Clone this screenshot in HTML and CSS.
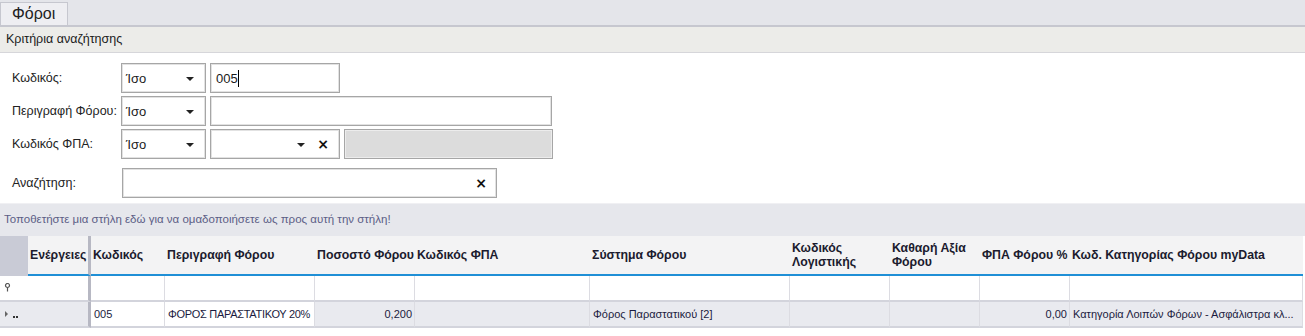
FILE: index.html
```html
<!DOCTYPE html>
<html lang="el">

<head>
    <meta charset="utf-8">
    <title>Φόροι</title>
    <link rel="stylesheet" href="styles.css">
</head>

<body>
    <div class="tabs">
        <div class="tab">Φόροι</div>
    </div>

    <div class="panel-title">Κριτήρια αναζήτησης</div>

    <div class="criteria">
        <div class="row">
            <label class="lbl">Κωδικός:</label>
            <div class="box op">Ίσο<span class="arrow"></span></div>
            <div class="box val-short"><span class="caret">005</span></div>
        </div>
        <div class="row">
            <label class="lbl">Περιγραφή Φόρου:</label>
            <div class="box op">Ίσο<span class="arrow"></span></div>
            <div class="box val-long"></div>
        </div>
        <div class="row">
            <label class="lbl">Κωδικός ΦΠΑ:</label>
            <div class="box op">Ίσο<span class="arrow"></span></div>
            <div class="box val-short combo"><span class="arrow"></span><span class="clear">×</span></div>
            <div class="box disabled"></div>
        </div>
        <div class="row search-row">
            <label class="lbl">Αναζήτηση:</label>
            <div class="box search"><span class="clear">×</span></div>
        </div>
    </div>

    <div class="group-panel">Τοποθετήστε μια στήλη εδώ για να ομαδοποιήσετε ως προς αυτή την στήλη!</div>

    <table class="grid">
        <colgroup>
            <col style="width:28px">
            <col style="width:63px">
            <col style="width:74px">
            <col style="width:150px">
            <col style="width:100px">
            <col style="width:175px">
            <col style="width:200px">
            <col style="width:100px">
            <col style="width:90px">
            <col style="width:90px">
            <col style="width:233px">
        </colgroup>
        <thead>
            <tr>
                <th class="ind"></th>
                <th class="actions">Ενέργειες</th>
                <th>Κωδικός</th>
                <th>Περιγραφή Φόρου</th>
                <th>Ποσοστό Φόρου</th>
                <th>Κωδικός ΦΠΑ</th>
                <th>Σύστημα Φόρου</th>
                <th>Κωδικός<br>Λογιστικής</th>
                <th>Καθαρή Αξία<br>Φόρου</th>
                <th>ΦΠΑ Φόρου %</th>
                <th>Κωδ. Κατηγορίας Φόρου myData</th>
            </tr>
        </thead>
        <tbody>
            <tr class="filter">
                <td class="ind">
                    <svg width="7" height="9" viewBox="0 0 7 9"><circle cx="3.5" cy="2.5" r="2" fill="none" stroke="#555" stroke-width="1.2"/><line x1="3.5" y1="4.5" x2="3.5" y2="8.5" stroke="#555" stroke-width="1.2"/></svg>
                </td>
                <td class="actions"></td>
                <td></td><td></td><td></td><td></td><td></td><td></td><td></td><td></td><td></td>
            </tr>
            <tr class="data">
                <td class="ind">
                    <svg width="16" height="8" viewBox="0 0 16 8"><path d="M1 1 L4 4 L1 7 Z" fill="#666"/><rect x="9" y="6" width="2" height="2" fill="#333"/><rect x="12" y="6" width="2" height="2" fill="#333"/></svg>
                </td>
                <td class="actions"></td>
                <td class="focus">005</td>
                <td class="focus caps">ΦΟΡΟΣ ΠΑΡΑΣΤΑΤΙΚΟΥ 20%</td>
                <td class="num">0,200</td>
                <td></td>
                <td>Φόρος Παραστατικού [2]</td>
                <td></td>
                <td></td>
                <td class="num">0,00</td>
                <td>Κατηγορία Λοιπών Φόρων - Ασφάλιστρα κλ...</td>
            </tr>
        </tbody>
    </table>
</body>

</html>
```

FILE: styles.css
```css
* {
    box-sizing: border-box;
}

body {
    margin: 0;
    background-color: #ffffff;
    color: #1b1b1b;
    font-family: "Liberation Sans", sans-serif;
    font-size: 12px;
}

.tabs {
    height: 27px;
    background-color: #e4e5ea;
    border-bottom: 2px solid #c6c7cf;
    padding-top: 2px;
    display: flex;
}

.tab {
    width: 68px;
    height: 23px;
    background-color: #eeeef2;
    border: 1px solid #c6c7cf;
    border-bottom: none;
    font-size: 16px;
    line-height: 22px;
    padding-left: 11px;
    color: #222;
}

.panel-title {
    height: 26px;
    background-color: #ecece9;
    border-bottom: 1px solid #d6d6da;
    font-size: 12.5px;
    line-height: 25px;
    padding-left: 6px;
}

.criteria {
    padding: 10px 0 5px 12px;
    font-size: 12.5px;
}

.row {
    display: flex;
    align-items: center;
    gap: 4px;
    margin-bottom: 3px;
}

.search-row {
    margin-top: 9px;
    margin-bottom: 0;
}

.lbl {
    width: 105px;
    color: #222;
    white-space: nowrap;
}

.search-row .lbl {
    width: 106px;
}

.box {
    height: 30px;
    border: 1px solid #a6a6a6;
    box-shadow: inset 0 0 0 1px #e2e2e2;
    background-color: #ffffff;
    display: flex;
    align-items: center;
    position: relative;
    padding-left: 5px;
    font-size: 13px;
}

.op {
    width: 85px;
    padding-left: 4px;
}

.val-short {
    width: 130px;
}

.val-long {
    width: 342px;
}

.disabled {
    width: 209px;
    background-color: #dcdcdc;
    box-shadow: inset 0 0 0 1px #ececec;
}

.search {
    width: 375px;
}

.caret {
    border-right: 1px solid #000;
    line-height: 17px;
}

.arrow {
    position: absolute;
    width: 0;
    height: 0;
    border-left: 4px solid transparent;
    border-right: 4px solid transparent;
    border-top: 4px solid #222;
    right: 11px;
    top: 13px;
}

.combo .arrow {
    right: 34px;
}

.clear {
    position: absolute;
    right: 10px;
    top: 6px;
    font-family: "DejaVu Sans", sans-serif;
    font-size: 14px;
    font-weight: bold;
    color: #111;
}

.search .clear {
    right: 9px;
}

.group-panel {
    height: 33px;
    background-color: #e6e7ec;
    border-top: 1px solid #f0f0f3;
    color: #5c5e86;
    font-size: 11.5px;
    line-height: 31px;
    padding-left: 4px;
}

.grid {
    table-layout: fixed;
    border-collapse: separate;
    border-spacing: 0;
    width: 1303px;
    font-size: 12px;
}

.grid th {
    height: 40px;
    background-color: #f3f3f4;
    border-bottom: 2px solid #1f8fd6;
    text-align: left;
    font-weight: bold;
    font-size: 12.3px;
    color: #1b1b2e;
    padding: 0 2px;
    line-height: 14px;
    overflow: hidden;
    white-space: nowrap;
}

.grid th.ind {
    background-color: #c9cbd6;
    border-bottom-color: #c9cbd6;
}

.grid .actions {
    border-right: 3px solid #b7b8c3;
}

.grid td {
    box-sizing: content-box;
    height: 24px;
    padding: 0 2px 0 3px;
    border-right: 1px solid #dcdce2;
    border-bottom: 2px solid #d3d4dc;
    color: #1b1b40;
    font-size: 11px;
    white-space: nowrap;
    overflow: hidden;
}

.grid td.caps {
    letter-spacing: -0.3px;
}

.grid td.ind {
    padding: 0 0 0 4px;
    border-right: none;
}

.filter td {
    background-color: #ffffff;
}

.data td {
    background-color: #e9eaef;
}

.data td.focus {
    background-color: #ffffff;
}

.num {
    text-align: right;
}
```
